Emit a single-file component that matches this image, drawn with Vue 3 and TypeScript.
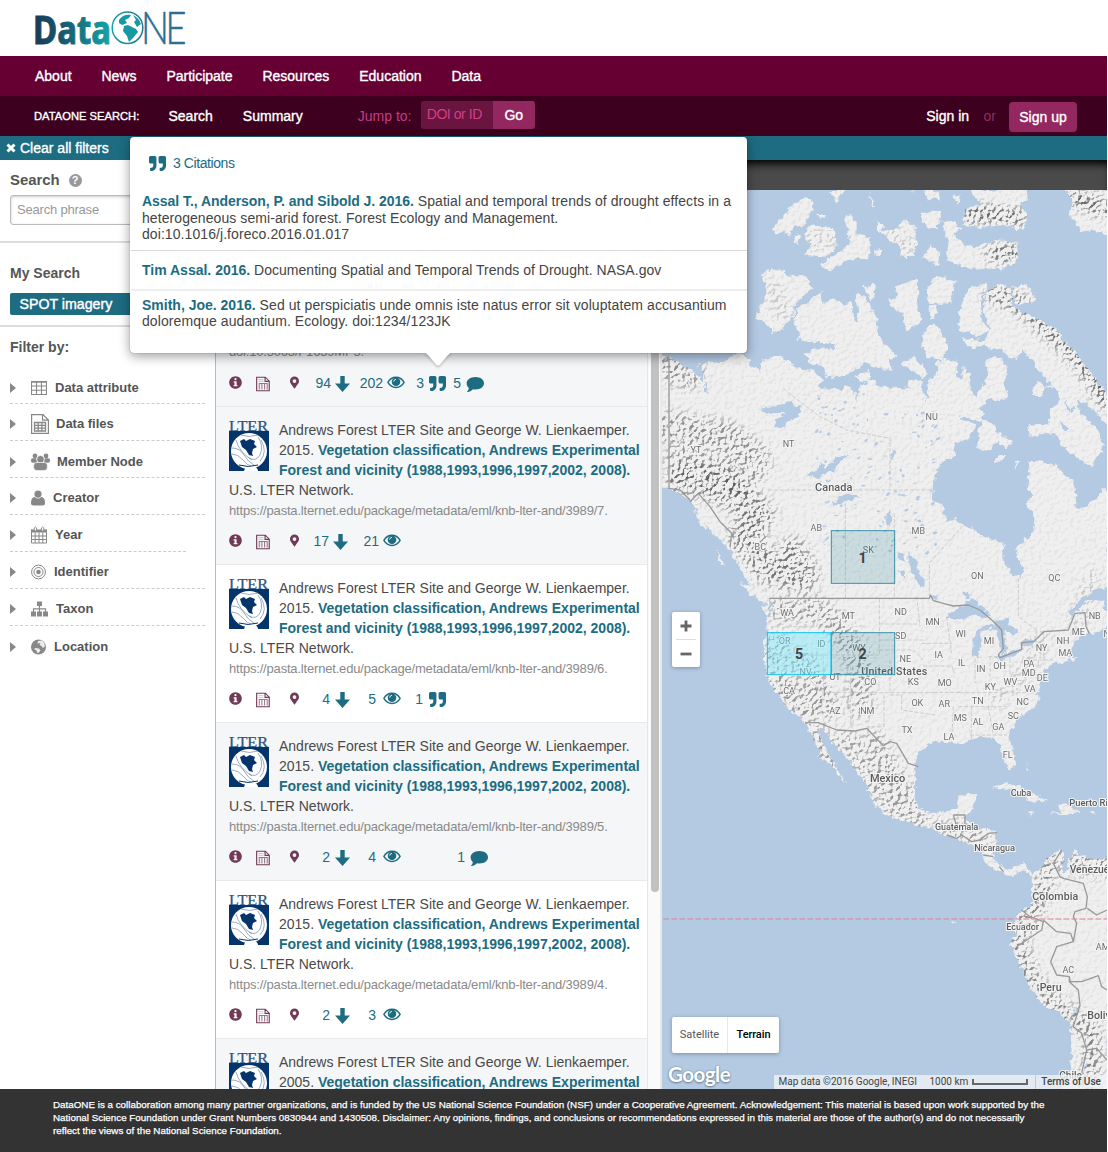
<script setup lang="ts">
interface Stat { kind: 'down' | 'eye' | 'quote' | 'comment'; value: number; width: number; gap: number }
interface Card { year: string; id: number; shaded: boolean; stats: Stat[] }

const nav = ['About', 'News', 'Participate', 'Resources', 'Education', 'Data']

const filters = [
  { icon: 'table', label: 'Data attribute', w: 16 },
  { icon: 'file', label: 'Data files', w: 18 },
  { icon: 'group', label: 'Member Node', w: 19 },
  { icon: 'user', label: 'Creator', w: 14 },
  { icon: 'calendar', label: 'Year', w: 16 },
  { icon: 'target', label: 'Identifier', w: 15 },
  { icon: 'tree', label: 'Taxon', w: 17 },
  { icon: 'globe', label: 'Location', w: 15 },
]

const cards: Card[] = [
  { year: '2015', id: 7, shaded: true, stats: [
    { kind: 'down', value: 17, width: 48, gap: 4 }, { kind: 'eye', value: 21, width: 53, gap: 4 }] },
  { year: '2015', id: 6, shaded: false, stats: [
    { kind: 'down', value: 4, width: 50, gap: 5 }, { kind: 'eye', value: 5, width: 51, gap: 7 }, { kind: 'quote', value: 1, width: 45, gap: 6 }] },
  { year: '2015', id: 5, shaded: true, stats: [
    { kind: 'down', value: 2, width: 50, gap: 5 }, { kind: 'eye', value: 4, width: 51, gap: 7 }, { kind: 'comment', value: 1, width: 87, gap: 5 }] },
  { year: '2015', id: 4, shaded: false, stats: [
    { kind: 'down', value: 2, width: 50, gap: 5 }, { kind: 'eye', value: 3, width: 51, gap: 7 }] },
  { year: '2005', id: 3, shaded: true, stats: [] },
]
const topStats: Stat[] = [
  { kind: 'down', value: 94, width: 50, gap: 4 }, { kind: 'eye', value: 202, width: 55, gap: 4 },
  { kind: 'quote', value: 3, width: 41, gap: 5 }, { kind: 'comment', value: 5, width: 38, gap: 5 },
]
const rows = [{ year: '', id: 0, shaded: true, stats: topStats } as Card, ...cards]

const citations = [
  { who: 'Assal T., Anderson, P. and Sibold J. 2016.', lines: ['Spatial and temporal trends of drought effects in a', 'heterogeneous semi-arid forest. Forest Ecology and Management.', 'doi:10.1016/j.foreco.2016.01.017'] },
  { who: 'Tim Assal. 2016.', lines: ['Documenting Spatial and Temporal Trends of Drought. NASA.gov'] },
  { who: 'Smith, Joe. 2016.', lines: ['Sed ut perspiciatis unde omnis iste natus error sit voluptatem accusantium', 'doloremque audantium. Ecology. doi:1234/123JK'] },
]

// Map geometry is in thirds of a pixel.
type Label = [string, number, number]
const regions: Label[] = [
  ['NU', 815, 771], ['NT', 386, 852], ['YT', 108, 871], ['AB', 469, 1104], ['MB', 775, 1113], ['SK', 625, 1170],
  ['BC', 301, 1161], ['ON', 952, 1248], ['QC', 1183, 1254], ['NB', 1304, 1368], ['WA', 381, 1359], ['MT', 565, 1368],
  ['ND', 722, 1356], ['MN', 818, 1386], ['SD', 722, 1428], ['WI', 902, 1422], ['MI', 987, 1443], ['ME', 1255, 1416],
  ['NH', 1209, 1443], ['NY', 1145, 1464], ['MA', 1216, 1479], ['OR', 374, 1443], ['ID', 484, 1452], ['WY', 597, 1464],
  ['NE', 736, 1497], ['IA', 836, 1485], ['IL', 905, 1509], ['IN', 963, 1527], ['OH', 1019, 1519], ['PA', 1107, 1512],
  ['MD', 1106, 1539], ['DE', 1147, 1554], ['NV', 437, 1535], ['UT', 525, 1551], ['CO', 631, 1566], ['KS', 760, 1566],
  ['MO', 854, 1569], ['KY', 991, 1581], ['WV', 1051, 1566], ['VA', 1110, 1587], ['CA', 387, 1593], ['OK', 772, 1629],
  ['AR', 853, 1632], ['TN', 953, 1623], ['NC', 1088, 1626], ['AZ', 525, 1653], ['NM', 622, 1653], ['MS', 901, 1674],
  ['AL', 954, 1686], ['SC', 1060, 1668], ['GA', 1015, 1701], ['TX', 741, 1710], ['LA', 867, 1731], ['FL', 1043, 1785],
  ['NS', 1348, 1422], ['AC', 1225, 2430], ['AM', 1328, 2361],
]
const places: [string, number, number, number, number][] = [
  ['Canada', 521, 984, 33, 112], ['United States', 703, 1536, 32, 198], ['Mexico', 683, 1857, 33, 106],
  ['Cuba', 1083, 1899, 28, 62], ['Guatemala', 890, 2001, 28, 130], ['Nicaragua', 1004, 2064, 28, 122],
  ['Colombia', 1186, 2211, 32, 138], ['Ecuador', 1088, 2301, 28, 98], ['Peru', 1172, 2484, 32, 66],
]

const mainland = 'M0 585 L40 595 75 625 110 638 125 668 128 640 115 615 150 605 190 610 230 580 265 590 272 618 300 632 308 600 330 592 365 590 410 625 465 635 490 660 472 682 525 690 575 677 592 725 598 680 630 655 665 680 750 687 745 660 785 658 785 680 800 725 806 670 832 635 830 605 855 596 888 605 892 655 903 662 908 620 928 640 930 680 948 710 975 670 985 640 973 600 1010 588 1028 605 1045 630 1030 670 1045 705 1025 728 985 715 965 740 950 748 975 755 960 785 930 775 895 765 920 785 945 795 930 835 880 850 885 885 850 905 820 960 815 1020 850 1035 855 1085 885 1080 920 1095 965 1125 1000 1140 1030 1145 1030 1205 1055 1240 1080 1255 1090 1230 1065 1170 1090 1145 1120 1115 1120 1060 1095 1030 1115 1005 1100 975 1108 930 1102 902 1160 905 1200 925 1212 945 1240 960 1245 990 1250 1045 1285 1035 1310 1015 1328 980 1345 995 V1282 L1310 1290 1270 1310 1225 1355 1238 1372 1275 1325 1310 1320 1335 1325 1328 1345 1345 1360 V1395 L1320 1415 1290 1420 1255 1430 1235 1465 1230 1490 1252 1492 1215 1505 1180 1510 1150 1530 1140 1580 1130 1600 1140 1620 1125 1640 1085 1665 1050 1710 1045 1730 1065 1790 1065 1820 1050 1832 1030 1795 1020 1755 995 1735 965 1730 930 1740 905 1755 880 1750 860 1745 820 1745 780 1770 770 1790 765 1820 765 1920 790 1955 830 1960 870 1955 890 1940 895 1910 920 1902 950 1902 935 1955 915 1975 940 2005 1010 2012 1008 2040 1005 2060 1000 2095 1020 2115 1045 2128 1070 2118 1090 2110 1112 2128 1116 2150 1095 2135 1065 2135 1060 2150 1010 2130 970 2105 970 2085 940 2055 900 2040 860 2025 820 2010 790 2002 740 1985 690 1970 640 1935 630 1900 610 1860 580 1820 550 1780 515 1750 490 1710 475 1705 480 1730 505 1780 530 1820 560 1870 545 1860 520 1820 475 1790 480 1775 450 1720 435 1688 400 1655 370 1630 340 1585 320 1550 308 1490 318 1430 322 1380 310 1338 330 1335 300 1300 262 1265 222 1190 190 1150 150 1110 120 1060 90 1025 55 995 20 985 0 980Z'
const south = 'M1345 2098 L1290 2095 1265 2085 1240 2070 1238 2090 1222 2108 1224 2130 1208 2140 1205 2115 1218 2090 1198 2065 1170 2090 1140 2125 1115 2150 1117 2230 1090 2250 1070 2270 1060 2300 1068 2325 1050 2350 1060 2380 1080 2410 1110 2480 1140 2530 1200 2560 1230 2595 1235 2660 1230 2740 1200 2800 H1345Z'
const islands = [
  'M305 335 L360 325 385 350 430 343 462 385 405 430 400 470 375 500 337 520 320 490 290 475 305 430 322 395Z',
  'M400 490 L412 445 450 420 485 398 488 435 520 415 550 435 575 425 582 470 590 490 595 465 590 405 610 400 630 440 650 480 655 530 690 565 712 590 692 600 694 632 640 625 618 605 600 620 560 645 500 652 490 620 450 610 430 580 470 565 530 567 520 552 470 548 415 535 420 515Z',
  'M610 382 L640 374 648 400 632 425Z M682 420 L712 415 708 380 770 355 778 400 772 440 785 480 750 510 735 495 725 460 695 440Z',
  'M803 375 L830 348 888 360 870 430 804 432Z M808 440 L832 435 825 475 812 480Z M790 520 L820 485 845 515 862 570 845 600 800 590 787 560Z',
  'M935 378 L985 370 960 430 965 480 988 510 960 530 900 510 897 460 912 410Z',
  'M978 395 L1020 375 1052 385 1060 440 1085 455 1120 470 1180 500 1215 545 1265 600 1310 665 1345 700 V800 L1310 760 1280 730 1250 720 1270 770 1310 800 1325 835 1330 880 1305 890 1300 920 1250 895 1200 850 1180 820 1110 830 1100 795 1165 790 1172 750 1200 720 1190 690 1140 640 1120 600 1085 570 1070 600 1020 570 980 560 925 565 908 535 970 540 990 510 970 450Z',
  'M1052 378 L1100 378 1130 425 1070 435Z M720 610 L765 590 805 640 790 655Z M582 650 L630 632 630 660 595 665Z',
  'M340 205 L400 130 440 110 462 130 440 190 400 205 390 230 370 210 342 230Z M410 222 L425 228 410 258 400 245Z',
  'M432 225 L450 195 520 205 530 260 500 290 430 285 455 255Z M555 175 L570 165 590 190 590 225 632 230 625 295 560 300 510 332 482 315 530 280 570 255Z',
  'M650 180 L672 195 665 215 710 205 730 180 765 195 770 250 760 292 722 290 720 260 655 215Z M782 155 L835 155 845 180 825 207 790 195Z',
  'M845 185 L880 182 905 210 880 220 915 255 960 260 1000 240 1070 245 1075 300 1035 328 920 325 900 315 860 300 865 250Z',
  'M930 90 H1100 L1103 120 1080 130 1105 170 1085 210 1050 210 1070 195 960 200 905 195 915 145 965 135Z',
  'M1215 90 H1345 V225 L1300 210 1260 215 1250 190 1225 160 1245 130Z M503 90 H555 L530 127Z M625 95 L650 140 640 142Z M792 92 H842 L838 117 800 115Z M877 105 L900 110 890 137Z',
  'M787 290 L815 252 838 275 835 318Z M645 270 L660 268 660 290 648 290Z',
  'M950 865 L965 775 1005 795 1015 820 1060 850 1040 862 1010 845 985 875Z M1118 690 L1135 660 1155 680 1145 705 1120 705Z M1003 905 L1015 885 1035 885 1020 905Z M1065 905 L1080 910 1070 930Z M1155 680 L1180 675 1175 685Z',
  'M245 1270 L275 1278 328 1318 333 1338 310 1330 265 1300Z M100 1050 L135 1060 140 1110 125 1095Z M170 1165 L192 1220 178 1210Z',
  'M995 1885 L1040 1870 1090 1885 1165 1925 1115 1928 1080 1900 1030 1885Z M1195 1935 L1215 1930 1262 1955 1210 1965 1165 1958 1200 1955Z M1098 1956 L1128 1961 1105 1967Z M1286 1957 L1310 1960 1290 1964Z M1098 1810 L1105 1830 1100 1832Z',
  'M873 2277 L882 2287 878 2292Z M965 665 L975 690 960 690Z M755 90 H770 L762 95Z M475 165 L495 165 492 172 478 172Z',
]
const lakes = [
  'M300 750 L350 740 390 722 398 732 425 742 415 770 385 780 370 805 340 800 345 780 375 758 340 760Z',
  'M440 945 L475 930 480 908 500 920 530 895 570 885 565 892 535 905 520 935 490 945 470 958Z',
  'M515 1025 L570 1003 600 1010 550 1022 525 1038Z M690 1055 L697 1080 685 1100 675 1080Z',
  'M745 1180 L770 1200 770 1230 790 1260 785 1285 765 1255 750 1230Z M715 1175 L735 1185 730 1210 712 1190Z M712 1230 L735 1235 735 1260Z',
  'M858 1370 L920 1330 935 1318 985 1355 990 1370 960 1372 945 1360 920 1375 890 1378Z',
  'M935 1475 L948 1415 975 1395 1020 1395 1035 1440 1042 1470 1025 1485 1018 1440 1000 1405 965 1410 962 1450 955 1490 940 1493Z',
  'M1000 1382 L1040 1380 1075 1420 1060 1425 1035 1410 1030 1450 1015 1430Z M1010 1492 L1050 1475 1088 1468 1070 1485 1020 1503Z M1080 1450 L1100 1436 1128 1440 1120 1455 1085 1462Z',
  'M910 1300 L925 1295 930 1312 918 1318Z M812 1305 L835 1310 825 1325Z M325 1310 L338 1320 340 1360 332 1350Z',
  'M1215 720 L1230 750 1248 735 1240 755 1218 750Z M1205 790 L1228 805 1210 815Z M135 660 L145 700 160 710 135 695Z M695 865 L708 880 700 900 692 885Z',
  'M1200 785 L1215 800 1228 815 1205 808Z M1240 2535 L1260 2555 1250 2560Z M1275 2705 L1280 2720 1272 2722Z',
]
// Scattered ponds of the northern shield, from a small fixed-seed generator.
let seed = 17
const rnd = () => (seed = (seed * 16807) % 2147483647) / 2147483647
const ponds = Array.from({ length: 130 }, () => {
  const x = 470 + rnd() * 370
  const y = 700 + rnd() * 480
  return { x, y, rx: 2 + rnd() * 6, ry: 1 + rnd() * 3.5, t: -45 + rnd() * 50 }
})
const stateLines = 'M370 685 L400 710 480 770 560 810 690 835 V985 M325 990 H815 M556 1030 V1315 M703 1060 V1315 M400 1400 H470 L485 1320 M322 1485 H658 V1315 M658 1392 H778 M658 1440 H790 M690 1500 V1597 M658 1470 H760 L790 1500 M590 1598 H830 M572 1598 V1700 M490 1485 V1597 H590 M572 1520 V1598 M672 1606 V1700 H620 M690 1605 H725 V1650 L825 1665 M785 1450 H875 M790 1518 H875 L885 1540 M820 1597 H900 M900 1598 H1100 M895 1640 H1040 M880 1640 L875 1745 M935 1640 V1740 M985 1640 L1000 1725 H1040 M930 1725 H1000 M945 1495 V1570 M985 1490 H1015 M990 1490 V1550 M1050 1480 V1545 H1140 M1085 1500 H1180 M1150 1415 V1490 M808 1310 V1210 L910 1095 M910 1095 L1030 1145 M1075 1255 V1370 L1130 1410 M770 1310 L780 1400 M860 1370 L875 1480 M430 1485 V1540 L490 1600 485 1640'
const borders = 'M328 1315 H808 L812 1305 820 1322 850 1330 880 1338 925 1335 960 1350 998 1382 1025 1410 1030 1465 1015 1485 1020 1493 1085 1468 1085 1448 1120 1445 1152 1415 1225 1410 1245 1360 1275 1358 1278 1400 1288 1420 M435 1688 L475 1688 530 1710 585 1713 620 1705 670 1757 690 1745 710 1750 745 1810 775 1820 M27 590 V985 L60 990 90 1020 M90 1025 L115 1000 150 1040 180 1085 215 1120 210 1160 M880 1965 H915 V1995 M880 1965 L890 2000 M860 2025 L890 2035 905 2025 935 2045 960 2040 985 2020 1012 2018 M970 2085 L1000 2090 M1018 2120 L1030 2135 M1205 2070 L1180 2110 1200 2150 1210 2155 1270 2170 1282 2210 1278 2245 1245 2255 1240 2270 1250 2290 1240 2345 1190 2360 1172 2405 1190 2445 1228 2450 1230 2465 1265 2465 1315 2447 1325 2480 1341 2490 M1282 2245 L1310 2265 1341 2250 M1085 2250 L1110 2270 1150 2285 1145 2310 1100 2340 1070 2360 M1150 2280 L1190 2315 1232 2320 1240 2345 M1228 2450 V2465 L1255 2490 1260 2535 1240 2600 1265 2620 1280 2670 1310 2665 1341 2700 M1280 2670 L1265 2740 1270 2780'
</script>

<template>
  <div class="page">
    <svg width="0" height="0" class="defs">
      <symbol id="i-info" viewBox="0 0 512 512"><path d="M256 8C119 8 8 119 8 256s111 248 248 248 248-111 248-248S393 8 256 8zm0 70c27 0 46 19 46 45s-19 45-46 45-46-19-46-45 19-45 46-45zm76 326H184v-54h32V256h-32v-54h116v148h32z" /></symbol>
      <symbol id="i-doc" viewBox="0 0 15 16"><path d="M.7.7H10L14.2 5V15.300H.7Z M9.700 .7V5.200H14.300" fill="none" stroke="currentColor" stroke-width="1.200" /><path d="M3.500 14V7.500H12V14M6.300 7.500V14M9.200 7.500V14" fill="none" stroke="currentColor" stroke-width="1.100" opacity=".7" /><path d="M2.500 3.200H8M2.500 5.200H8" fill="none" stroke="currentColor" stroke-width=".8" opacity=".35" /></symbol>
      <symbol id="i-pin" viewBox="0 0 384 512"><path d="M172 502C27 291 0 269 0 192a192 192 0 0 1 384 0c0 77-27 99-172 310-10 13-30 13-40 0zM192 272a80 80 0 1 0 0-160 80 80 0 0 0 0 160z" /></symbol>
      <symbol id="i-down" viewBox="0 0 15 16"><path d="M5.300 0H9.700V7.500H15L7.500 16 0 7.500H5.300Z" /></symbol>
      <symbol id="i-eye" viewBox="0 0 18 13"><path d="M.9 6.400C4.800-.4 13.200-.4 17.100 6.400 13.200 13.100 4.800 13.100 .9 6.400Z" fill="none" stroke="currentColor" stroke-width="1.400" /><circle cx="9" cy="5.700" r="4.300" /><path d="M6.700 5.600Q6.800 3.500 8.900 3.300" fill="none" stroke="#fff" stroke-width=".9" /></symbol>
      <symbol id="i-quote" viewBox="0 32 512 448"><path d="M464 32H336c-26 0-48 22-48 48v128c0 26 22 48 48 48h80v64c0 35-29 64-64 64h-8c-13 0-24 11-24 24v48c0 13 11 24 24 24h8c88 0 160-72 160-160V80c0-26-22-48-48-48zm-288 0H48C22 32 0 54 0 80v128c0 26 22 48 48 48h80v64c0 35-29 64-64 64h-8c-13 0-24 11-24 24v48c0 13 11 24 24 24h8c88 0 160-72 160-160V80c0-26-22-48-48-48z" /></symbol>
      <symbol id="i-comment" viewBox="0 0 18 15"><path d="M9.500 0C14.500 0 18 2.800 18 6.300s-3.600 6.200-8.500 6.200c-.9 0-1.800-.1-2.500-.3C5.500 13.700 3.500 14.800 1.300 15c-.4 0-.5-.4-.2-.6 1-.8 1.700-2 1.700-3.400C1.400 9.800.6 8.200.6 6.300.6 2.800 4.500 0 9.500 0z" /></symbol>
      <symbol id="i-table" viewBox="0 0 16 14"><path d="M.5.500H15.500V13.500H.5ZM.5 5H15.500M.5 9.300H15.500M5.500 .5V13.500M10.500 .5V13.500" fill="none" stroke="currentColor" stroke-width="1.100" /><path d="M.5 1H15.500" stroke="currentColor" stroke-width="1.500" /></symbol>
      <symbol id="i-file" viewBox="0 0 18 20"><path d="M.6.6H12L17.400 6V19.400H.6ZM11.500 .6V6.200H17.400" fill="none" stroke="currentColor" stroke-width="1.200" /><path d="M3.500 8.500H14.500V17H3.500ZM3.500 11.300H14.500M3.500 14.200H14.500M7.200 8.500V17M10.900 8.500V17" fill="none" stroke="currentColor" stroke-width="1.300" /></symbol>
      <symbol id="i-group" viewBox="0 0 19 17"><circle cx="4" cy="2.500" r="2.400" /><circle cx="15" cy="2.500" r="2.400" /><rect y="4.800" width="6.500" height="4.500" rx="1.800" /><rect x="12.500" y="4.800" width="6.500" height="4.500" rx="1.800" /><circle cx="9.500" cy="5.800" r="3.900" stroke="#fff" stroke-width=".9" /><rect x="2.700" y="9" width="13.600" height="8" rx="3" stroke="#fff" stroke-width=".6" /></symbol>
      <symbol id="i-user" viewBox="0 0 14 15"><circle cx="7" cy="3.600" r="3.600" /><path d="M3.600 6.500Q7 9.500 10.400 6.500 14 7 14 12.500 14 15 11.500 15H2.500Q0 15 0 12.500 0 7 3.600 6.500Z" /></symbol>
      <symbol id="i-calendar" viewBox="0 0 16 17"><path d="M0 3H16V6H0Z" /><path d="M.5 3V16.500H15.500V3M.5 9.500H15.500M.5 13H15.500M4.200 6V16.500M8 6V16.500M11.800 6V16.500" fill="none" stroke="currentColor" stroke-width="1" /><path d="M3.200 4.500V1.500Q4.400-.6 5.600 1.500V4.500ZM10.400 4.500V1.500Q11.600-.6 12.800 1.500V4.500Z" fill="#fff" stroke="currentColor" stroke-width="1" /></symbol>
      <symbol id="i-target" viewBox="0 0 15 15"><g fill="none" stroke="currentColor"><circle cx="7.500" cy="7.500" r="6.900" /><circle cx="7.500" cy="7.500" r="4.500" /></g><circle cx="7.500" cy="7.500" r="2.300" /></symbol>
      <symbol id="i-tree" viewBox="0 0 17 15"><path d="M6 0H11V4.500H9.100V6.800H15.100V10H17V15H12V10H13.900V8H9.100V10H11V15H6V10H7.900V8H3.100V10H5V15H0V10H1.900V6.800H7.900V4.500H6Z" /></symbol>
      <symbol id="i-globe" viewBox="0 0 15 15"><circle cx="7.500" cy="7.500" r="7.500" /><path d="M7 1.500L11 1 13.500 4 13.800 7 12 8.500 10.500 6.500 8.500 5.500 9.500 4 8 3.500 6.500 4.500ZM4.500 8.500L8 9 9.500 11 7.500 13.500 6 13 5.500 11 3 9.500Z" fill="#fff" opacity=".85" /></symbol>
    </svg>

    <header class="brand">
      <svg width="190" height="56" viewBox="0 0 190 56">
        <defs>
          <linearGradient id="dg" x1="34" x2="111" y1="0" y2="0" gradientUnits="userSpaceOnUse"><stop offset="0" stop-color="#173b56" /><stop offset=".35" stop-color="#17566f" /><stop offset="1" stop-color="#14a5a8" /></linearGradient>
          <linearGradient id="og" x1="0" x2="1"><stop offset="0" stop-color="#14a0a5" /><stop offset="1" stop-color="#1d7893" /></linearGradient>
        </defs>
        <text x="33" y="44" class="logo-bold" textLength="78" lengthAdjust="spacingAndGlyphs" fill="url(#dg)" stroke="url(#dg)" stroke-width="1">Data</text>
        <ellipse cx="127.500" cy="27.700" rx="15.300" ry="15.800" fill="#fff" stroke="url(#og)" stroke-width="1.500" />
        <path d="M119 20Q123 14 131 15L129 18 125 20 127 23 122 25 119 23ZM124 26L128 25 136 29 138 32 133 38 129 42 127 36 123 31ZM133 15Q139 18 141 24L137 27 134 22 136 20Z" fill="#159aa3" />
        <text x="141" y="44" class="logo-thin" textLength="28" lengthAdjust="spacingAndGlyphs">N</text>
        <text x="165.500" y="44" class="logo-thin" textLength="21" lengthAdjust="spacingAndGlyphs">E</text>
      </svg>
    </header>
    <nav class="nav"><a v-for="n in nav" :key="n">{{ n }}</a></nav>
    <div class="sub">
      <span class="title">DATAONE SEARCH:</span>
      <a class="s1">Search</a><a>Summary</a>
      <span class="jump">Jump to:</span>
      <span class="doi">DOI or ID</span><span class="go">Go</span>
      <span class="grow"></span>
      <a>Sign in</a><span class="or">or</span><span class="signup">Sign up</span>
    </div>
    <div class="clear">
      <svg width="10" height="10" viewBox="0 0 10 10"><path d="M1.500 1.500L8.500 8.500M8.500 1.500L1.500 8.500" stroke="#fff" stroke-width="3" /></svg>
      <span>Clear all filters</span>
    </div>

    <main class="main">
      <aside class="side">
        <div class="block search">
          <h3>Search <i>?</i></h3>
          <div class="field">Search phrase</div>
        </div>
        <div class="block mine">
          <h3>My Search</h3>
          <div class="tag">SPOT imagery</div>
        </div>
        <h3 class="by">Filter by:</h3>
        <div v-for="f in filters" :key="f.label" class="filter" :class="f.icon">
          <b class="tri"></b>
          <svg :width="f.w" height="20"><use :href="'#i-' + f.icon" /></svg>
          <span>{{ f.label }}</span>
        </div>
      </aside>

      <section class="results">
        <div class="list">
          <article v-for="c in rows" :key="c.id" :class="{ shaded: c.shaded }">
            <div v-if="c.id" class="body">
              <svg class="lter" width="40" height="52" viewBox="0 0 40 52">
                <text x="0" y="11" textLength="39" lengthAdjust="spacingAndGlyphs">LTER</text>
                <rect y="11" width="40" height="40" fill="#05346a" />
                <circle cx="20" cy="31" r="18" fill="#fff" />
                <path d="M11 21L15 19 17 21 21 19 26 21 25 24 28 27 24 29 23 33 24 36 20 35 17 30 13 27Z" fill="#05346a" />
                <path d="M3 28Q11 28 15 35T25 45M3 34Q9 34 14 40T22 46M29 17Q35 26 31 35 27 42 20 38M32 20Q39 32 31 41M7 20Q10 32 23 40M12 15Q20 18 29 15" fill="none" stroke="#6d8aaf" stroke-width=".7" />
                <path d="M15 51Q16 46 22 46 29 47 29 51Z" fill="#fff" />
                <path d="M10 45Q19 48 29 45" stroke="#05346a" fill="none" />
              </svg>
              <p>Andrews Forest LTER Site and George W. Lienkaemper.<br>{{ c.year }}. <b>Vegetation classification, Andrews Experimental<br>Forest and vicinity (1988,1993,1996,1997,2002, 2008).</b></p>
              <p>U.S. LTER Network.</p>
              <p class="url">https://pasta.lternet.edu/package/metadata/eml/knb-lter-and/3989/{{ c.id }}.</p>
            </div>
            <div v-else class="body first"><p class="url">doi:10.5063/F1639MP5.</p></div>
            <div class="stats">
              <svg width="13" height="13" class="plum info"><use href="#i-info" /></svg>
              <svg width="14" height="16" class="plum doc"><use href="#i-doc" /></svg>
              <svg width="9" height="13" class="plum pin"><use href="#i-pin" /></svg>
              <span v-for="s in c.stats" :key="s.kind" class="stat" :style="{ width: s.width + 'px', gap: s.gap + 'px' }">{{ s.value }}<svg :class="s.kind"><use :href="'#i-' + s.kind" /></svg></span>
            </div>
          </article>
        </div>
        <div class="track"><div class="thumb"></div></div>
      </section>

      <section class="map-col">
        <div class="map-head"></div>
        <div class="map">
          <svg width="445" height="899" viewBox="6 90 1335 2697">
            <defs>
              <filter id="coast" x="0" y="0" width="1" height="1"><feTurbulence type="fractalNoise" baseFrequency=".06" numOctaves="2" seed="4" /><feDisplacementMap in="SourceGraphic" scale="22" xChannelSelector="R" yChannelSelector="G" /></filter>
              <filter id="relief" x="0" y="0" width="1" height="1" color-interpolation-filters="sRGB">
                <feTurbulence type="fractalNoise" baseFrequency=".085" numOctaves="3" seed="8" result="n" />
                <feColorMatrix in="n" values="0 0 0 0 0  0 0 0 0 0  0 0 0 0 0  1 0 0 0 0" />
                <feDiffuseLighting surfaceScale="20" diffuseConstant="1.130" lighting-color="#fff"><feDistantLight azimuth="225" elevation="57" /></feDiffuseLighting>
                <feComponentTransfer><feFuncR type="table" tableValues=".2 .35 .62 .88 .94 .94" /><feFuncG type="table" tableValues=".2 .35 .62 .88 .94 .94" /><feFuncB type="table" tableValues=".2 .35 .62 .88 .94 .94" /></feComponentTransfer>
              </filter>
              <filter id="soft"><feGaussianBlur stdDeviation="16" /></filter>
              <mask id="land" maskUnits="userSpaceOnUse" x="0" y="80" width="1350" height="2720"><g fill="#fff" filter="url(#coast)"><rect x="0" y="80" width="1350" height="2720" fill="#000" /><path :d="mainland" /><path :d="south" /><path v-for="d in islands" :key="d" :d="d" /><g fill="#000"><path v-for="d in lakes" :key="d" :d="d" /></g></g></mask>
              <mask id="hills" maskUnits="userSpaceOnUse" x="0" y="80" width="1350" height="2720">
                <rect x="0" y="80" width="1350" height="2720" fill="#fff" opacity=".055" />
                <g fill="none" stroke="#fff" filter="url(#soft)" stroke-linecap="round" stroke-linejoin="round">
                  <path d="M20 620L90 640M20 800L200 830 290 900 250 960 60 900" stroke-width="90" opacity=".5" />
                  <path d="M60 960L180 980 300 1060 250 1130 330 1230 430 1250 400 1180" stroke-width="90" opacity=".65" />
                  <path d="M360 1350L480 1350 560 1430 600 1520 600 1640M350 1450L350 1560 430 1660M430 1500L500 1640" stroke-width="75" opacity=".45" />
                  <path d="M560 1740L640 1860 700 1950 790 1980M640 1740L760 1950M470 1720L540 1850M860 2005L960 2030" stroke-width="60" opacity=".45" />
                  <path d="M1180 2090L1130 2230 1080 2300 1075 2360 1110 2450 1160 2520 1230 2560 1300 2620 1290 2780M1240 2110L1341 2120" stroke-width="55" opacity=".6" />
                  <path d="M1000 400L1080 430 1180 520 1260 600 1341 720M930 160L1080 170M1000 280H1060M1240 110L1341 150" stroke-width="50" opacity=".8" />
                  <path d="M340 380L370 460M450 240H510M700 210L750 260M1010 1620L1100 1530 1150 1430M1250 1380L1300 1250" stroke-width="50" opacity=".2" />
                </g>
              </mask>
            </defs>
            <rect x="0" y="80" width="1350" height="2720" fill="#b4cae3" />
            <g mask="url(#land)">
              <rect x="0" y="80" width="1350" height="2720" fill="#f0f0f0" />
              <g mask="url(#hills)"><rect x="0" y="80" width="1350" height="2720" filter="url(#relief)" /></g>
              <g fill="#b4cae3"><ellipse v-for="(p, i) in ponds" :key="i" :cx="p.x" :cy="p.y" :rx="p.rx" :ry="p.ry" :transform="`rotate(${p.t} ${p.x} ${p.y})`" /></g>
              <path :d="stateLines" class="dash" />
            </g>
            <path :d="borders" class="border" />
            <path d="M10 2277H1341" class="equator" />
            <g class="labels">
              <text v-for="l in regions" :key="l[0]" :x="l[1]" :y="l[2] + 9">{{ l[0] }}</text>
              <text v-for="p in places" :key="p[0]" :x="p[1]" :y="p[2] + 10" :font-size="p[3]" :textLength="p[4]" class="place">{{ p[0] }}</text>
              <g class="place start"><text x="1228" y="1939" font-size="28">Puerto Rico</text><text x="1229" y="2140" font-size="31">Venezuela</text><text x="1282" y="2578" font-size="32">Bolivia</text><text x="1198" y="2757" font-size="30">Chile</text></g>
            </g>
            <g class="cells">
              <rect x="514" y="1112" width="190" height="158" /><rect x="514" y="1418" width="190" height="126" />
              <rect x="322" y="1418" width="191" height="126" class="hot" />
              <text x="608" y="1209">1</text><text x="608" y="1496">2</text><text x="417" y="1496">5</text>
            </g>
          </svg>
          <div class="zoom"><span><svg width="12" height="12" viewBox="0 0 12 12"><path d="M.5 6H11.500M6 .5V11.500" /></svg></span><span><svg width="12" height="12" viewBox="0 0 12 12"><path d="M.5 6H11.500" /></svg></span></div>
          <div class="types"><span>Satellite</span><span class="on">Terrain</span></div>
          <div class="google">Google</div>
          <div class="attr"><span class="d">Map data ©2016 Google, INEGI</span><span>1000 km</span><i></i><b>Terms of Use</b></div>
        </div>
      </section>
    </main>

    <footer class="foot">DataONE is a collaboration among many partner organizations, and is funded by the US National Science Foundation (NSF) under a Cooperative Agreement. Acknowledgement: This material is based upon work supported by the<br>National Science Foundation under Grant Numbers 0830944 and 1430508. Disclaimer: Any opinions, findings, and conclusions or recommendations expressed in this material are those of the author(s) and do not necessarily<br>reflect the views of the National Science Foundation.</footer>

    <div class="popup">
      <h4><svg width="17" height="15"><use href="#i-quote" /></svg>3 Citations</h4>
      <div v-for="c in citations" :key="c.who" class="item">
        <p v-for="(l, i) in c.lines" :key="l"><b v-if="i === 0">{{ c.who }}</b> {{ l }}</p>
      </div>
      <svg class="beak" width="30" height="15" viewBox="0 0 30 15"><path d="M0 0Q3 .5 5 3L13 12.500Q15 14.500 17 12.500L25 3Q27 .5 30 0Z" fill="#fff" /></svg>
    </div>
  </div>
</template>

<style>
body { background: #fff; }
</style>
<style scoped>
.page { position: relative; width: 1107px; height: 1152px; overflow: hidden; font: 14px/20px "Liberation Sans", Arial, sans-serif; color: #4a4a4a; background: #fff; }
.page * { box-sizing: border-box; }
p, h3, h4 { margin: 0; }
.defs { position: absolute; }
svg { display: block; fill: currentColor; flex: none; }
.brand { height: 56px; }
.logo-bold { font: 700 38.500px "Noto Sans", sans-serif; }
.logo-thin { font: 300 45px Lato, sans-serif; fill: #2b6f92; stroke: #2b6f92; stroke-width: .5; }
.nav { height: 40px; background: #660033; display: flex; align-items: center; gap: 29.900px; padding-left: 35px; color: #fff; -webkit-text-stroke: .35px #fff; }
.sub { height: 40px; background: #3d001e; display: flex; align-items: center; color: #fff; padding: 0 30px 0 34px; }
.sub a, .title, .go, .signup, .clear span { -webkit-text-stroke: .35px #fff; }
.title { font-size: 11.200px; width: 134.500px; }
.s1 { margin-right: 30px; }
.jump { color: #c73b84; margin-left: 55px; width: 63px; }
.doi { width: 72px; height: 28px; background: #6a1440; color: #cf4089; border-radius: 3px 0 0 3px; padding-left: 6px; line-height: 27px; margin-top: -2px; letter-spacing: -.45px; }
.go { width: 42px; height: 28px; background: #93275f; border-radius: 0 3px 3px 0; text-align: center; line-height: 28px; margin-top: -2px; }
.grow { flex: 1; }
.or { color: #8b2f63; margin: 0 13px 0 14.500px; }
.signup { background: #93275f; border-radius: 4px; width: 68px; height: 30px; line-height: 30px; text-align: center; margin-top: 2px; }
.clear { height: 24px; background: #1d6c82; display: flex; align-items: center; color: #fff; padding-left: 6px; gap: 4px; }
.main { height: 929px; display: flex; }
.side { width: 216px; border-right: 1px solid #bbb; }
h3 { font-size: 14px; line-height: 20px; color: #555; }
.block { border-bottom: 2px solid #ddd; padding: 10px 10px 0; }
.search { height: 83px; }
.search h3 { display: flex; align-items: center; gap: 9px; font-size: 14.900px; }
.search i { width: 13px; height: 13px; border-radius: 50%; background: #999; color: #fff; font: 700 11px/13px "Liberation Sans", sans-serif; text-align: center; }
.field { margin-top: 5px; height: 30px; border: 1px solid #bbb; border-radius: 3px; box-shadow: inset 0 1px 3px #ccc; padding-left: 6px; font-size: 13px; letter-spacing: -.2px; line-height: 27px; color: #999; }
.mine { height: 84px; padding-top: 20px; }
.tag { margin-top: 10px; height: 22px; background: #1d6c82; color: #fff; border-radius: 2px; padding-left: 9.500px; line-height: 22px; font-size: 14.200px; -webkit-text-stroke: .4px #fff; }
.by { padding: 10px 10px 0; margin-bottom: 10px; }
.filter { height: 37px; margin: 0 10px; display: flex; align-items: center; padding-top: 4px; font-weight: 700; font-size: 13px; color: #555; border-bottom: 1px dashed #ccc; }
.filter.table, .filter.group { padding-top: 5px; }
.filter:last-child { border: 0; }
.filter.calendar { margin-right: 29px; }
.filter svg { color: #888; margin: 0 8px 0 15px; }
.filter.file svg, .filter.group svg { margin-right: 7px; }
.tri { width: 0; border: 5px solid transparent; border-left: 6px solid #888; border-right: 0; }
.results { width: 446px; display: flex; overflow: hidden; }
.list { width: 432px; height: 929px; overflow: hidden; padding-top: 88px; border-right: 1px solid #e4e6e7; }
article { height: 158px; padding: 13px 0 0 13px; border-top: 1px solid #e7e9ea; }
.shaded { background: #f4f6f7; }
.body { height: 100px; white-space: nowrap; }
.first { padding-top: 79px; }
.lter { float: left; margin-right: 10px; }
.lter text { font: 15px "Liberation Serif", serif; fill: #2d5480; stroke: #2d5480; stroke-width: .25; }
.body b { color: #1d6c82; letter-spacing: .005px; }
.body p { letter-spacing: 0; }
.body .url { font-size: 13px; color: #8a8a8a; letter-spacing: -.185px; line-height: 21px; }
.stats { display: flex; align-items: center; height: 20px; margin-top: 11px; }
.plum { color: #713a56; }
.info { margin-top: -1px; }
.doc { margin: 2px 0 0 14px; }
.pin { margin: -1px 1px 0 20px; }
.stat { display: flex; justify-content: flex-end; align-items: center; color: #1d6c82; }
.down { width: 15px; height: 16px; margin-top: 2px; }
.eye { width: 18px; height: 13px; margin-top: -1px; }
.quote { width: 17px; height: 15px; }
.comment { width: 18px; height: 15px; margin-top: 2px; }
.track { width: 14px; background: #fafafa; padding-left: 3px; border-right: 2px solid #e8e8e8; }
.thumb { width: 8px; height: 732px; background: #c1c1c1; border-radius: 0 0 4px 4px; }
.map-col { width: 445px; }
.map-head { height: 30px; background: #4a4a4a; box-shadow: inset 0 8px 8px -4px #000; }
.map { position: relative; height: 899px; overflow: hidden; font-family: Roboto, sans-serif; }
.dash { fill: none; stroke: #ccc; stroke-width: 3; stroke-dasharray: 12 5; }
.border { fill: none; stroke: #999; stroke-width: 4; stroke-linejoin: round; }
.equator { stroke: #e08a96; stroke-width: 5; stroke-dasharray: 18 6; opacity: .75; }
.labels { font-size: 27px; fill: #6d6d6d; stroke: #f5f5f5; stroke-width: 6px; paint-order: stroke; text-anchor: middle; opacity: .99; }
.place { fill: #5a5a5a; font-weight: 500; }
.start { text-anchor: start; }
.cells rect { fill: #1d8299; fill-opacity: .17; stroke: #3d93a8; stroke-width: 3; }
.cells .hot { fill: #6fe8ff; fill-opacity: .42; stroke: #0cc5ee; }
.cells text { font-size: 43px; font-weight: 700; fill: #444; text-anchor: middle; }
.zoom { position: absolute; left: 10px; top: 422px; width: 28px; height: 55px; background: #fff; border-radius: 2px; box-shadow: 0 1px 4px rgba(0,0,0,.3); padding: 0 4px; }
.zoom span { display: flex; height: 27px; align-items: center; justify-content: center; }
.zoom span + span { border-top: 1px solid #ddd; height: 28px; }
.zoom path { stroke: #666; stroke-width: 2.800; }
.types { position: absolute; left: 10px; top: 827px; width: 107px; height: 36px; display: flex; background: #fff; border-radius: 2px; box-shadow: 0 1px 4px rgba(0,0,0,.3); font-size: 11px; line-height: 35px; color: #565656; text-align: center; }
.types span { width: 55px; }
.types .on { width: 52px; color: #000; font-weight: 500; border-left: 1px solid #e8e8e8; letter-spacing: -.1px; }
.google { position: absolute; left: 6px; top: 871px; font: 700 20.500px/26px Lato, sans-serif; letter-spacing: -.5px; color: #fff; text-shadow: 0 0 2px #6f8196, 0 1px 2px #6f8196; }
.attr { position: absolute; left: 112px; right: 0; bottom: 0; height: 14px; display: flex; background: rgba(240,243,246,.78); font-size: 10px; line-height: 14px; color: #444; padding-left: 4.500px; white-space: nowrap; }
.attr .d { width: 151px; }
.attr i { width: 56px; height: 6px; margin: 4px 7px 0 4px; border: 2px solid #666; border-top: 0; }
.attr b { font-weight: 500; border-left: 1px solid #b4cae3; padding-left: 5px; }
.foot { height: 63px; background: #333; color: #fff; font-size: 9.820px; line-height: 13px; padding: 9px 0 0 53px; white-space: nowrap; -webkit-text-stroke: .25px #fff; }
.popup { position: absolute; left: 130px; top: 137px; width: 617px; height: 216px; background: #fff; border-radius: 4px; box-shadow: 0 3px 12px rgba(0,0,0,.4), 0 0 1px rgba(0,0,0,.5); padding-top: 16px; }
h4 { display: flex; align-items: center; gap: 7.500px; height: 20px; padding-left: 18.500px; font-weight: 400; color: #1d6c82; font-size: 14px; letter-spacing: -.42px; }
.item { margin-left: 1px; padding: 20px 0 7px 11px; line-height: 16.500px; font-size: 14px; color: #444; white-space: nowrap; letter-spacing: .075px; }
.item b { color: #1d6c82; letter-spacing: -.05px; }
.item + .item { border-top: 1px solid #d8d8d8; padding: 11px 0 11px 11px; letter-spacing: .02px; }
.item + .item b { letter-spacing: 0; }
.item + .item + .item { border-top: 2px solid #eee; padding-top: 5.500px; letter-spacing: .085px; }
.beak { position: absolute; left: 293px; top: 215px; filter: drop-shadow(0 2px 1px rgba(0,0,0,.18)); }
</style>
